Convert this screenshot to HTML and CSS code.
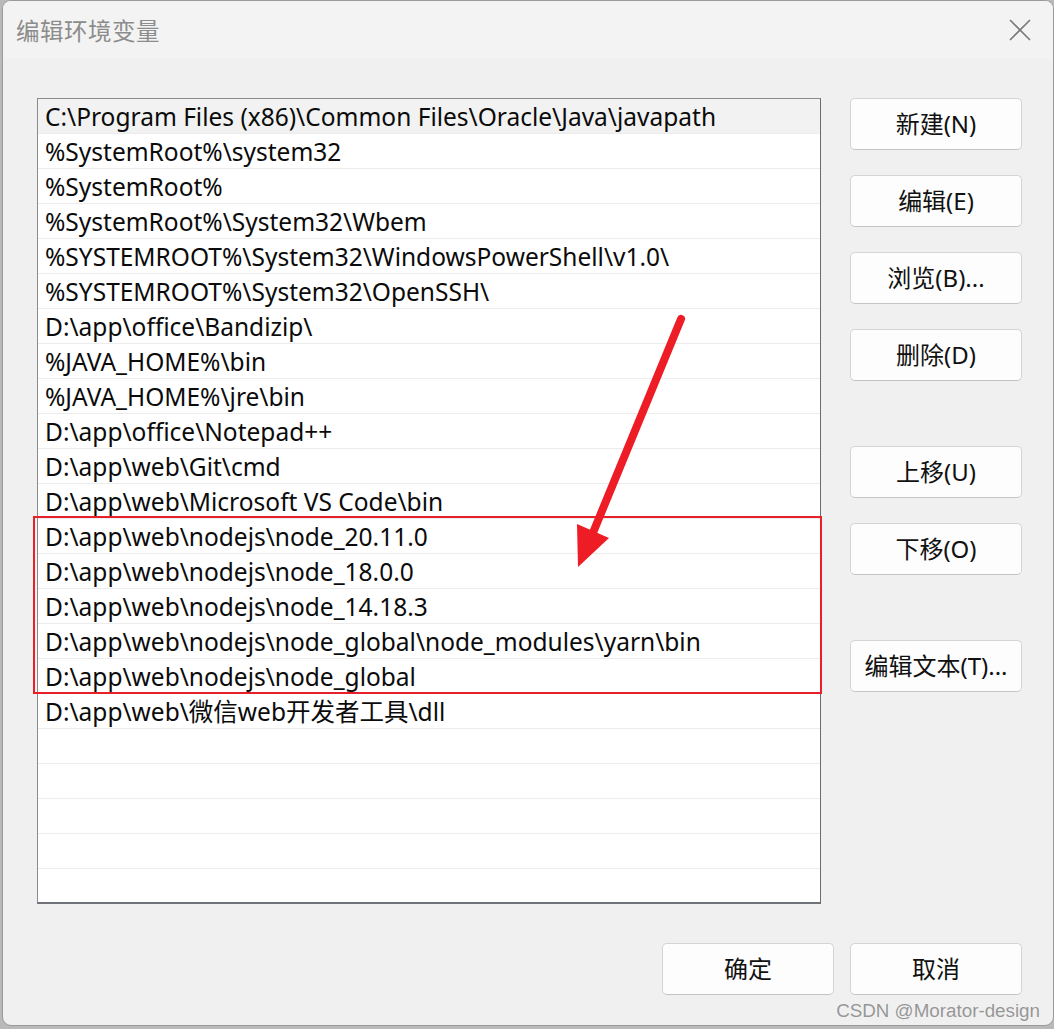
FILE: index.html
```html
<!DOCTYPE html>
<html lang="zh-CN">
<head>
<meta charset="utf-8">
<title>编辑环境变量</title>
<link rel="stylesheet" href="styles.css">
</head>
<body>
<div class="dialog">
  <div class="titlebar">
    <span class="title">编辑环境变量</span>
    <span class="close" aria-label="关闭">
      <svg width="24" height="24" viewBox="0 0 24 24"><path d="M2 2 L22 22 M22 2 L2 22" stroke="#7a7a7a" stroke-width="1.6" fill="none"/></svg>
    </span>
  </div>
  <div class="content">
    <ul class="list">
      <li class="row selected">C:\Program Files (x86)\Common Files\Oracle\Java\javapath</li>
      <li class="row">%SystemRoot%\system32</li>
      <li class="row">%SystemRoot%</li>
      <li class="row">%SystemRoot%\System32\Wbem</li>
      <li class="row">%SYSTEMROOT%\System32\WindowsPowerShell\v1.0\</li>
      <li class="row">%SYSTEMROOT%\System32\OpenSSH\</li>
      <li class="row">D:\app\office\Bandizip\</li>
      <li class="row">%JAVA_HOME%\bin</li>
      <li class="row">%JAVA_HOME%\jre\bin</li>
      <li class="row">D:\app\office\Notepad++</li>
      <li class="row">D:\app\web\Git\cmd</li>
      <li class="row">D:\app\web\Microsoft VS Code\bin</li>
      <li class="row">D:\app\web\nodejs\node_20.11.0</li>
      <li class="row">D:\app\web\nodejs\node_18.0.0</li>
      <li class="row">D:\app\web\nodejs\node_14.18.3</li>
      <li class="row">D:\app\web\nodejs\node_global\node_modules\yarn\bin</li>
      <li class="row">D:\app\web\nodejs\node_global</li>
      <li class="row">D:\app\web\微信web开发者工具\dll</li>
      <li class="row"></li>
      <li class="row"></li>
      <li class="row"></li>
      <li class="row"></li>
      <li class="row last"></li>
    </ul>
    <div class="side">
      <div class="group">
        <button class="btn">新建(N)</button>
        <button class="btn">编辑(E)</button>
        <button class="btn">浏览(B)...</button>
        <button class="btn">删除(D)</button>
      </div>
      <div class="group">
        <button class="btn">上移(U)</button>
        <button class="btn">下移(O)</button>
      </div>
      <div class="group">
        <button class="btn">编辑文本(T)...</button>
      </div>
    </div>
  </div>
  <div class="footer">
    <button class="btn">确定</button>
    <button class="btn">取消</button>
  </div>
</div>

<!-- annotation layer: red frame around the nodejs entries and the pointing arrow -->
<svg class="annotation" width="1054" height="1029" viewBox="0 0 1054 1029">
  <rect x="34" y="517" width="787" height="176" fill="none" stroke="#e8202a" stroke-width="2"/>
  <line x1="681" y1="319" x2="590" y2="540" stroke="#ee1c25" stroke-width="8" stroke-linecap="round"/>
  <polygon points="577,524 609,538 578,567" fill="#ee1c25"/>
</svg>

<div class="watermark">CSDN @Morator-design</div>
</body>
</html>
```

FILE: styles.css
```css
html, body {
  margin: 0;
  padding: 0;
}

body {
  width: 1054px;
  height: 1029px;
  overflow: hidden;
  background: #b9b9b9;
  position: relative;
  font-family: "Noto Sans", "Noto Sans CJK SC", sans-serif;
  color: #111;
}

.dialog {
  margin-left: 2px;
  width: 1052px;
  height: 1026px;
  box-sizing: border-box;
  border: 1px solid #9a9a9a;
  border-radius: 9px;
  background: #f0f0f0;
  overflow: hidden;
  display: flex;
  flex-direction: column;
}

.titlebar {
  height: 58px;
  flex: none;
  background: #f3f3f3;
  display: flex;
  align-items: center;
  justify-content: space-between;
  padding: 0 21px 0 13px;
}

.title {
  font-family: "Noto Sans CJK SC", sans-serif;
  font-size: 23.5px;
  color: #8c8c8c;
  letter-spacing: 0.5px;
}

.close {
  display: flex;
  width: 24px;
  height: 24px;
}

.content {
  display: flex;
  align-items: flex-start;
  padding: 39px 0 0 34px;
}

.list {
  list-style: none;
  margin: 0;
  padding: 0;
  width: 784px;
  height: 806px;
  box-sizing: border-box;
  background: #fff;
  border: 1px solid #8b8b8b;
  border-right-color: #6c6c6c;
  border-bottom: 2px solid #6f7377;
  overflow: hidden;
}

.row {
  height: 35px;
  box-sizing: border-box;
  border-bottom: 1px solid #ececec;
  padding-left: 7px;
  font-size: 24.5px;
  line-height: 36px;
  white-space: nowrap;
  color: #0b0b0b;
}

.row.selected {
  background: #f2f2f2;
}

.row.last {
  border-bottom: none;
}

.side {
  margin-left: 29px;
  display: flex;
  flex-direction: column;
  gap: 65px;
}

.group {
  display: flex;
  flex-direction: column;
  gap: 25px;
}

.btn {
  width: 172px;
  height: 52px;
  box-sizing: border-box;
  background: #fdfdfd;
  border: 1px solid #d4d4d4;
  border-bottom-color: #c4c4c4;
  border-radius: 5px;
  font-family: "Noto Sans", "Noto Sans CJK SC", sans-serif;
  font-size: 24px;
  color: #111;
  padding: 0 0 3px;
  margin: 0;
}

.footer {
  margin-top: auto;
  display: flex;
  justify-content: flex-end;
  gap: 16px;
  padding: 0 31px 30px 0;
}

.annotation {
  position: absolute;
  top: 0;
  left: 0;
  pointer-events: none;
}

.watermark {
  position: absolute;
  right: 14px;
  bottom: 7px;
  font-family: "Liberation Sans", Arial, sans-serif;
  font-size: 18.8px;
  color: rgba(120, 120, 120, 0.75);
}
```
